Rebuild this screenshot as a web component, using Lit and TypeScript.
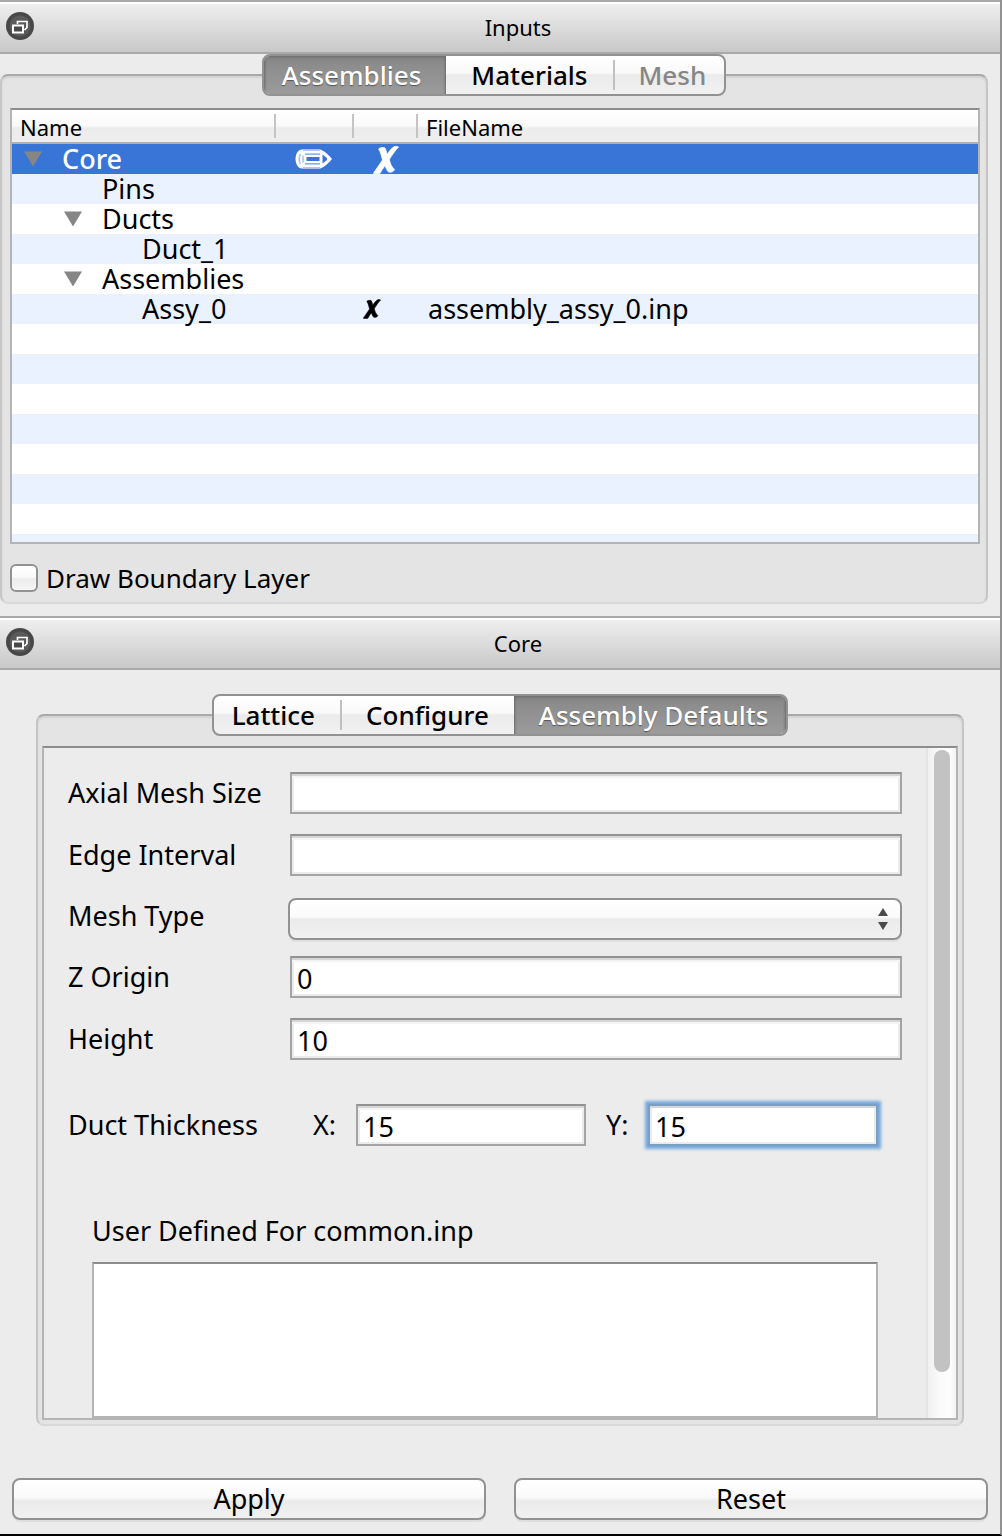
import { LitElement, html, css, svg, nothing } from "lit";
import { customElement, property, state } from "lit/decorators.js";
import { classMap } from "lit/directives/class-map.js";

type TabItem = { label: string; disabled?: boolean };

type TreeRow = {
  label: string;
  level: number;
  open?: boolean;
  editable?: boolean;
  removable?: boolean;
  file?: string;
};

const rows: TreeRow[] = [
  { label: "Core", level: 0, open: true, editable: true, removable: true },
  { label: "Pins", level: 1 },
  { label: "Ducts", level: 1, open: true },
  { label: "Duct_1", level: 2 },
  { label: "Assemblies", level: 1, open: true },
  { label: "Assy_0", level: 2, removable: true, file: "assembly_assy_0.inp" },
];

const floatIcon = svg`
  <svg class="float-icon" viewBox="0 0 28 28" aria-hidden="true">
    <circle cx="14" cy="14" r="14" fill="#484848" />
    <circle cx="14" cy="14" r="10.5" fill="#5a5a5a" />
    <path d="M11.500 12V9.500H21V15.500L18.500 18" fill="none" stroke="#fff" stroke-width="1.700" />
    <rect x="7" y="13.500" width="10" height="7" fill="#4a4a4a" stroke="#fff" stroke-width="2" />
  </svg>`;

const pencilIcon = svg`
  <svg class="pencil" viewBox="0 0 38 20" aria-hidden="true">
    <path d="M7 .5H25.500C29 2 34 6 37 10C34 14 29 18 25.500 19.500H7C3 19.500 .5 15 .5 10S3 .5 7 .5Z" fill="#fff" />
    <path d="M8 1.200H25M8 18.800H25" stroke="#b4c8f0" stroke-width="1.600" />
    <path d="M10 5.200H25M10 14.800H25" stroke="#6f98e2" stroke-width="1.200" />
    <path d="M11.500 8H24.500V12H11.500Z" fill="#3875d7" />
    <path d="M27.500 5.500L32 9V11L27.500 14.500Z" fill="#3875d7" />
    <path d="M5.500 5C3.800 7.500 3.800 12.500 5.500 15M8 6.500V13.500" fill="none" stroke="#a9bfee" stroke-width="1.500" />
  </svg>`;

const crossIcon = svg`
  <svg class="cross" viewBox="0 0 26 28" aria-hidden="true">
    <path d="M5.500 3C7 1.500 10.500 1 12 2C13 4 13.500 6 14.200 8.500C16 5.500 18.500 2 21 .8C22.500 0 24.800 .2 25.500 1C22.500 4 18.800 9.500 16.300 13.500C17.300 18 18.800 21 21.500 23.500C20.500 26 17 27 15 25.500C13.500 23.500 12.800 21.500 12 19.500C10 22 8.500 25 7 27.500C5 28 1.500 28 .3 27.300C3.500 23 6.800 18 9.500 14C8.200 9.500 7.800 6 5.500 3Z" fill="currentColor" stroke="currentColor" stroke-width="0.800" />
  </svg>`;

const arrowIcon = svg`
  <svg class="arrow" viewBox="0 0 18 16" aria-hidden="true">
    <path d="M0 0.500H18L9 15.500Z" fill="#868686" />
  </svg>`;

@customElement("dock-title")
export class DockTitle extends LitElement {
  @property() label = "";

  static styles = css`
    :host {
      display: block;
    }
    .bar {
      box-sizing: border-box;
      display: grid;
      grid-template-columns: 36px 1fr;
      align-items: center;
      height: 54px;
      padding: 0 0 2px;
      border-top: 2px solid #a9a9a9;
      border-bottom: 2px solid #a9a9a9;
      background: linear-gradient(#fff 2px, #efefef 2px, #c8c8c8);
    }
    .float {
      justify-self: start;
      margin-left: 6px;
      padding: 0;
      width: 28px;
      height: 28px;
      border: 0;
      background: none;
    }
    .float-icon {
      display: block;
      width: 28px;
      height: 28px;
    }
    .title {
      margin: 0;
      padding: 2px 0 0 0;
      font-weight: 400;
      font-size: 22px;
      line-height: 30px;
      text-align: center;
    }
  `;

  render() {
    return html`
      <header class="bar">
        <button class="float" type="button" aria-label="Float ${this.label}">${floatIcon}</button>
        <h2 class="title">${this.label}</h2>
      </header>
    `;
  }
}

@customElement("segment-tabs")
export class SegmentTabs extends LitElement {
  @property({ attribute: false }) items: TabItem[] = [];
  @property({ type: Number }) selected = 0;

  static styles = css`
    :host {
      display: block;
      font-size: 26px;
    }
    .group {
      display: flex;
      box-sizing: border-box;
      height: 42px;
      border: 2px solid #929292;
      border-radius: 8px;
      background: linear-gradient(#fff, #f9f9f9 45%, #ebebeb 50%, #f1f1f1);
      overflow: hidden;
    }
    .tab {
      margin: 0;
      padding: 0 25px;
      border: 0;
      background: none;
      color: #000;
      font: inherit;
      font-weight: 500;
      line-height: 38px;
    }
    .tab:first-child {
      padding-left: 18px;
    }
    .tab:last-child {
      padding-right: 18px;
    }
    .tab.divided {
      padding-left: 26px;
      background: linear-gradient(#c0c0c0, #c0c0c0) left center / 2px 30px no-repeat;
    }
    .tab:disabled {
      color: #868686;
    }
    .tab.on {
      margin: -2px 0;
      line-height: 42px;
      color: #fff;
      text-shadow: 0 1px 1px #555;
      background: linear-gradient(#7c7c7c, #8b8b8b 20%, #9c9c9c);
      box-shadow: inset 0 2px 3px #5e5e5e, inset 0 0 3px #666;
    }
  `;

  render() {
    return html`
      <div class="group" role="tablist">
        ${this.items.map((item, i) => {
          const on = i === this.selected;
          const divided = i > 0 && !on && i !== this.selected + 1;
          return html`<button
            type="button"
            role="tab"
            aria-selected=${on ? "true" : "false"}
            ?disabled=${item.disabled ?? false}
            class=${classMap({ tab: true, on, divided })}
            @click=${() => (this.selected = i)}
          >${item.label}</button>`;
        })}
      </div>
    `;
  }
}

@customElement("input-tree")
export class InputTree extends LitElement {
  @state() private current = 0;

  static styles = css`
    :host {
      display: block;
      border: 2px solid #b4b4b4;
      border-top-color: #8c8c8c;
      min-height: 432px;
      background: repeating-linear-gradient(#fff 0 30px, #ebf2ff 30px 60px) 0 34px no-repeat #fff;
    }
    .tree {
      width: 100%;
      table-layout: fixed;
      border-collapse: separate;
      border-spacing: 0;
    }
    .col-name {
      width: 264px;
    }
    .col-edit {
      width: 78px;
    }
    .col-remove {
      width: 64px;
    }
    th {
      box-sizing: border-box;
      height: 34px;
      padding: 2px 0 0 8px;
      border-bottom: 2px solid #b0b0b0;
      background: linear-gradient(#c4c4c4, #c4c4c4) right 4px / 2px 24px no-repeat,
        linear-gradient(#fff, #fafafa 50%, #ececec 56%, #eee);
      font-weight: 400;
      font-size: 22px;
      line-height: 28px;
      text-align: left;
    }
    th:last-child {
      background: linear-gradient(#fff, #fafafa 50%, #ececec 56%, #eee);
    }
    td {
      height: 30px;
      padding: 0;
      line-height: 30px;
      vertical-align: top;
      white-space: nowrap;
    }
    .selected td {
      background: #3875d7;
      color: #fff;
      font-weight: 500;
    }
    .name {
      display: flex;
      padding-left: 12px;
    }
    .level-1 {
      padding-left: 52px;
    }
    .level-2 {
      padding-left: 92px;
    }
    .twist {
      display: flex;
      align-items: center;
      width: 38px;
      height: 30px;
    }
    .arrow {
      width: 18px;
      height: 16px;
    }
    .action {
      display: flex;
      align-items: center;
      height: 30px;
      padding: 0 0 0 9px;
      border: 0;
      background: none;
      color: inherit;
    }
    .pencil {
      width: 38px;
      height: 20px;
      margin-left: 10px;
    }
    .cross {
      width: 18px;
      height: 20px;
    }
    .selected .cross {
      width: 26px;
      height: 28px;
      margin: 2px 0 0 10px;
    }
    .file {
      padding-left: 10px;
    }
  `;

  render() {
    return html`
      <table class="tree">
        <colgroup>
          <col class="col-name" />
          <col class="col-edit" />
          <col class="col-remove" />
          <col />
        </colgroup>
        <thead>
          <tr>
            <th scope="col">Name</th>
            <th></th>
            <th></th>
            <th scope="col">FileName</th>
          </tr>
        </thead>
        <tbody>
          ${rows.map(
            (row, i) => html`
              <tr class=${classMap({ selected: i === this.current })} @click=${() => (this.current = i)}>
                <td>
                  <div class="name level-${row.level}">
                    <span class="twist">${row.open ? arrowIcon : nothing}</span>${row.label}
                  </div>
                </td>
                <td>
                  ${row.editable
                    ? html`<button class="action" type="button" aria-label="Edit ${row.label}">${pencilIcon}</button>`
                    : nothing}
                </td>
                <td>
                  ${row.removable
                    ? html`<button class="action" type="button" aria-label="Remove ${row.label}">${crossIcon}</button>`
                    : nothing}
                </td>
                <td class="file">${row.file ?? nothing}</td>
              </tr>
            `,
          )}
        </tbody>
      </table>
    `;
  }
}

@customElement("app-root")
export class AppRoot extends LitElement {
  static styles = css`
    :host {
      box-sizing: border-box;
      display: flex;
      flex-direction: column;
      min-height: 100vh;
      border-right: 2px solid #929292;
      border-bottom: 2px solid #000;
      background: #ececec;
      color: #000;
      font-family: "Noto Sans", "Open Sans", sans-serif;
      font-size: 27px;
      line-height: 30px;
    }
    .inputs {
      display: flex;
      flex-direction: column;
      padding: 0 12px 12px 0;
    }
    .core {
      flex: 1;
      display: flex;
      flex-direction: column;
      padding: 24px 36px 0;
    }
    .tabs {
      align-self: center;
      margin-bottom: -22px;
      z-index: 1;
    }
    .frame {
      display: flex;
      flex-direction: column;
      border: 2px solid #c6c6c6;
      border-top-color: #a9a9a9;
      border-bottom-color: #d8d8d8;
      border-radius: 8px;
      background: #e4e4e4;
      box-shadow: inset 0 2px 2px #d2d2d2;
    }
    .tree-frame {
      padding: 32px 6px 8px 8px;
    }
    .form-frame {
      flex: 1;
      padding: 30px 4px 4px;
    }
    .boundary {
      display: flex;
      align-items: center;
      gap: 8px;
      margin-top: 18px;
      height: 32px;
      font-size: 26px;
    }
    .tick {
      appearance: none;
      box-sizing: border-box;
      margin: 0;
      width: 28px;
      height: 28px;
      border: 2px solid #929292;
      border-radius: 6px;
      background: linear-gradient(#fff, #fafafa 45%, #ececec 55%, #f6f6f6);
    }
    .scroller {
      flex: 1;
      display: flex;
      border: 2px solid #b4b4b4;
      border-top-color: #8c8c8c;
      background: #ececec;
    }
    .form {
      flex: 1;
      min-width: 0;
      display: flex;
      flex-direction: column;
      padding: 24px 24px 0;
    }
    .fields {
      display: grid;
      grid-template-columns: 222px 1fr;
      row-gap: 20px;
      align-items: center;
    }
    .text {
      box-sizing: border-box;
      width: 100%;
      min-width: 0;
      height: 42px;
      padding: 2px 5px 0;
      border: 2px solid #a4a4a4;
      border-top-color: #929292;
      border-radius: 0;
      outline: none;
      background: #fff;
      box-shadow: inset 0 2px #d6d6d6, inset 0 4px #f4f4f4, inset 0 0 0 2px #ebebeb;
      color: #000;
      font: inherit;
    }
    .text.focused {
      border-color: #7a9fc6;
      box-shadow: 0 0 3px 3px #75a8dc, inset 0 2px #d6d6d6, inset 0 0 0 2px #ebebeb;
    }
    .picker {
      display: flex;
      align-items: center;
      margin: 2px 0 -4px -2px;
    }
    .pick {
      appearance: none;
      box-sizing: border-box;
      flex: 1;
      height: 42px;
      border: 2px solid #929292;
      border-radius: 8px;
      background: linear-gradient(#fff, #fafafa 45%, #ebebeb 50%, #f1f1f1);
      box-shadow: 0 2px #e0e0e0;
      font: inherit;
    }
    .steps {
      width: 10px;
      height: 22px;
      margin-left: -24px;
      margin-right: 14px;
      pointer-events: none;
    }
    .duct {
      display: grid;
      grid-template-columns: 245px 43px 230px 20px 42px 230px;
      align-items: center;
      margin-top: 44px;
    }
    .y-label {
      grid-column: 5;
    }
    .user {
      flex: 1;
      display: flex;
      flex-direction: column;
      gap: 16px;
      padding: 70px 24px 0;
    }
    .notes {
      box-sizing: border-box;
      flex: 1;
      width: 100%;
      min-height: 156px;
      padding: 4px;
      border: 2px solid #b4b4b4;
      border-top-color: #8c8c8c;
      border-radius: 0;
      background: #fff;
      font: inherit;
      resize: none;
    }
    .track {
      box-sizing: border-box;
      width: 30px;
      padding: 2px 6px 46px;
      border-left: 2px solid #e4e4e4;
      background: linear-gradient(90deg, #f0f0f0, #fafafa 40%, #fdfdfd 80%, #f2f2f2);
    }
    .thumb {
      width: 16px;
      height: 100%;
      border-radius: 8px;
      background: #c2c2c2;
    }
    .buttons {
      display: grid;
      grid-template-columns: 1fr 1fr;
      gap: 28px;
      padding: 52px 12px 14px;
    }
    .push {
      box-sizing: border-box;
      height: 42px;
      padding: 0;
      border: 2px solid #929292;
      border-radius: 8px;
      background: linear-gradient(#fff, #fafafa 45%, #ebebeb 55%, #f1f1f1);
      box-shadow: 0 2px #dedede;
      color: #000;
      font: inherit;
    }
  `;

  render() {
    return html`
      <dock-title label="Inputs"></dock-title>
      <section class="inputs">
        <segment-tabs
          class="tabs"
          .items=${[{ label: "Assemblies" }, { label: "Materials" }, { label: "Mesh", disabled: true }]}
          .selected=${0}
        ></segment-tabs>
        <div class="frame tree-frame">
          <input-tree></input-tree>
          <label class="boundary"><input class="tick" type="checkbox" />Draw Boundary Layer</label>
        </div>
      </section>

      <dock-title label="Core"></dock-title>
      <section class="core">
        <segment-tabs
          class="tabs"
          .items=${[{ label: "Lattice" }, { label: "Configure" }, { label: "Assembly Defaults" }]}
          .selected=${2}
        ></segment-tabs>
        <div class="frame form-frame">
          <div class="scroller">
            <form class="form">
              <div class="fields">
                <label for="axial">Axial Mesh Size</label>
                <input class="text" id="axial" type="text" />
                <label for="edge">Edge Interval</label>
                <input class="text" id="edge" type="text" />
                <label for="mesh">Mesh Type</label>
                <div class="picker">
                  <select class="pick" id="mesh"></select>
                  <svg class="steps" viewBox="0 0 10 22" aria-hidden="true">
                    <path d="M5 0L10 8H0ZM5 22L0 14H10Z" fill="#4a4a4a" />
                  </svg>
                </div>
                <label for="origin">Z Origin</label>
                <input class="text" id="origin" type="text" value="0" />
                <label for="height">Height</label>
                <input class="text" id="height" type="text" value="10" />
              </div>
              <div class="duct">
                <span>Duct Thickness</span>
                <label for="duct-x">X:</label>
                <input class="text" id="duct-x" type="text" value="15" aria-label="Duct Thickness X" />
                <label class="y-label" for="duct-y">Y:</label>
                <input class="text focused" id="duct-y" type="text" value="15" aria-label="Duct Thickness Y" />
              </div>
              <div class="user">
                <label for="notes">User Defined For common.inp</label>
                <textarea class="notes" id="notes"></textarea>
              </div>
            </form>
            <div class="track"><div class="thumb"></div></div>
          </div>
        </div>
      </section>
      <footer class="buttons">
        <button class="push" type="button">Apply</button>
        <button class="push" type="button">Reset</button>
      </footer>
    `;
  }
}
